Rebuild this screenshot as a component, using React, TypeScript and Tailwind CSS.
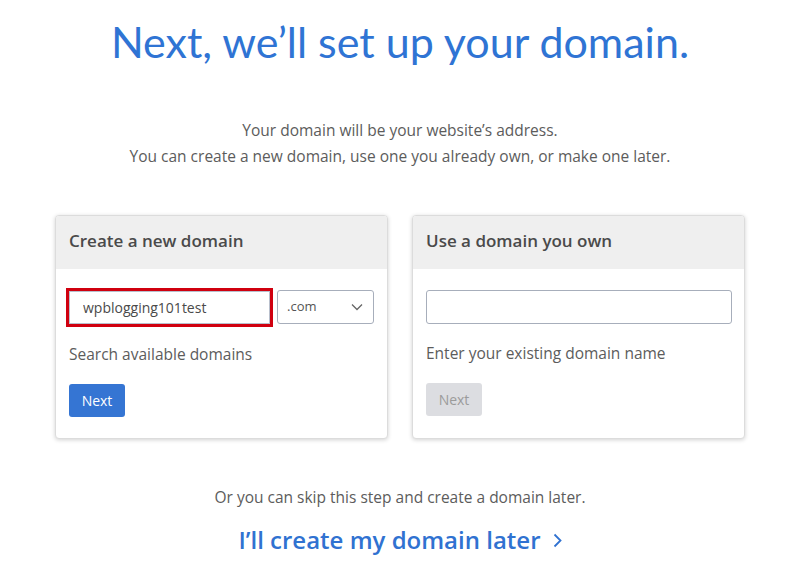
import React from "react";

const body = { fontFamily: '"Open Sans", "Liberation Sans", sans-serif' };

const CardShell = ({ title, children }) => (
  <div className="w-[333px] overflow-hidden rounded-[4px] border border-[#dcdcdc] bg-white shadow-[0_1px_4px_rgba(0,0,0,0.18)]">
    <div className="flex h-[53px] items-center bg-[#efefef] px-[13px] pb-[3px] text-[17px] font-semibold text-[#4a4a4a]">
      {title}
    </div>
    <div className="px-[13px] pt-[21px] pb-[21px]">{children}</div>
  </div>
);

export default function App() {
  return (
    <div className="flex min-h-[571px] w-[800px] flex-col items-center bg-white" style={body}>
      <h1
        className="mt-[16px] text-[43px] leading-[52px] font-normal text-[#2f74d4]"
        style={{ fontFamily: 'Lato, "Open Sans", sans-serif' }}
      >
        Next, we’ll set up your domain.
      </h1>
      <div className="mt-[49px] text-center text-[15.5px] leading-[26px] text-[#5c5c5c]">
        <p>Your domain will be your website’s address.</p>
        <p>You can create a new domain, use one you already own, or make one later.</p>
      </div>
      <div className="mt-[46px] flex gap-[24px]">
        <CardShell title="Create a new domain">
          <div className="flex items-center gap-[7px]">
            <input
              readOnly
              value="wpblogging101test"
              className="h-[33px] w-[201px] border border-[#b8bfcc] px-[13px] text-[14px] text-[#4a4a4a] outline-[3px] outline-[#d0000f] outline-solid"
            />
            <div className="flex h-[34px] w-[98px] items-center justify-between rounded-[3px] border border-[#a7aebb] pr-[10px] pl-[9px] text-[13px] text-[#555]">
              <span>.com</span>
              <svg width="12" height="8" viewBox="0 0 12 8" fill="none">
                <path d="M1 1.5L6 6.5L11 1.5" stroke="#666" strokeWidth="1.3" />
              </svg>
            </div>
          </div>
          <p className="mt-[19px] text-[15.5px] leading-[22px] text-[#5c5c5c]">Search available domains</p>
          <button className="mt-[19px] h-[33px] w-[56px] rounded-[3px] bg-[#3575d3] text-[14px] text-white">
            Next
          </button>
        </CardShell>
        <CardShell title="Use a domain you own">
          <input
            readOnly
            className="block h-[34px] w-[306px] rounded-[3px] border border-[#a7aebb] px-[12px] text-[14px] outline-none"
          />
          <p className="mt-[18px] text-[15.5px] leading-[22px] text-[#5c5c5c]">Enter your existing domain name</p>
          <button className="mt-[19px] h-[33px] w-[56px] rounded-[3px] bg-[#dcdde1] text-[14px] text-[#9b9b9b]">
            Next
          </button>
        </CardShell>
      </div>
      <p className="mt-[46px] text-[15.5px] leading-[24px] text-[#5c5c5c]">
        Or you can skip this step and create a domain later.
      </p>
      <a className="mt-[15px] flex items-center gap-[12px] text-[24px] leading-[32px] font-semibold text-[#3072d1]">
        I’ll create my domain later
        <svg width="9" height="15" viewBox="0 0 9 15" fill="none">
          <path d="M1.5 1.5L7.5 7.5L1.5 13.5" stroke="#3072d1" strokeWidth="1.8" />
        </svg>
      </a>
    </div>
  );
}
